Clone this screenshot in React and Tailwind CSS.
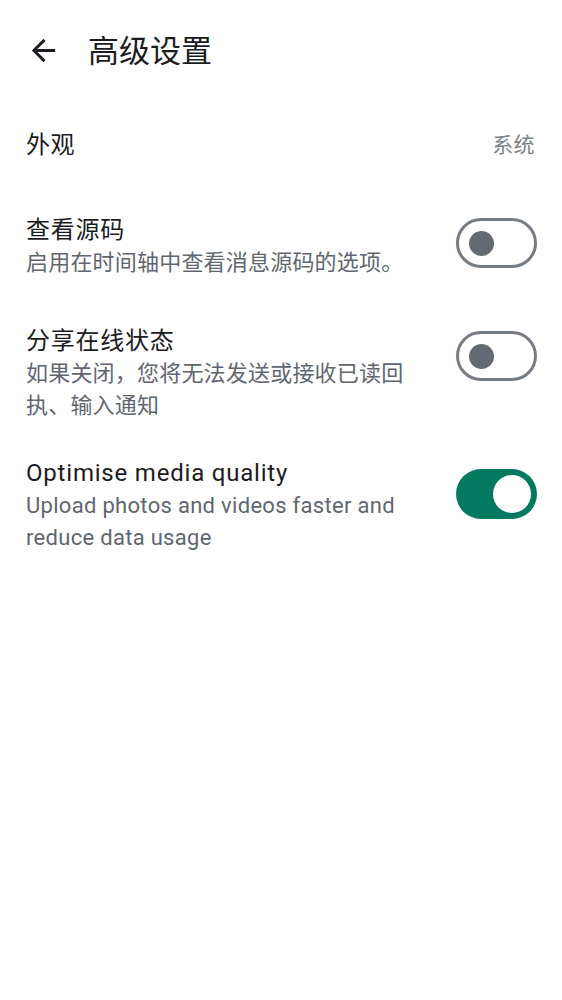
import { useState } from 'react';

const Toggle = ({ on, onClick, className }) => (
    <button
        onClick={onClick}
        className={`relative w-[81px] h-[50px] shrink-0 rounded-full ${on ? 'bg-[#037a5f]' : 'border-[3px] border-[#767c84] bg-white'} ${className}`}
    >
        {on ? (
            <span className="absolute right-[6px] top-[6px] h-[38px] w-[38px] rounded-full bg-white" />
        ) : (
            <span className="absolute left-[9.5px] top-[9.5px] h-[25px] w-[25px] rounded-full bg-[#646a73]" />
        )}
    </button>
);

const App = () => {
    const [source, setSource] = useState(false);
    const [presence, setPresence] = useState(false);
    const [media, setMedia] = useState(true);

    return (
        <div className="min-h-screen w-full bg-white text-[#1b1c1f] font-['Roboto','Noto_Sans_CJK_SC',sans-serif]">
            {/* top bar */}
            <div className="flex h-[103px] items-center">
                <button className="ml-[26px] mt-[-3px] flex h-[35px] w-[35px] items-center justify-center">
                    <svg viewBox="0 0 24 24" width="35" height="35" fill="#1b1c1f">
                        <path d="M20 11H7.83l5.59-5.59L12 4l-8 8 8 8 1.41-1.41L7.83 13H20v-2z" />
                    </svg>
                </button>
                <h1 className="ml-[27px] text-[31px] leading-[40px] font-normal">高级设置</h1>
            </div>

            {/* appearance */}
            <div className="flex h-[84px] items-center justify-between pl-[26px] pr-[27px]">
                <span className="text-[24px] leading-[32px] tracking-[0.5px]">外观</span>
                <span className="text-[21px] leading-[32px] tracking-[0.4px] text-[#7d838b]">系统</span>
            </div>

            {/* view source */}
            <div className="flex items-start justify-between pl-[26px] pr-[25px] pt-[27px]">
                <div className="flex flex-col">
                    <span className="text-[24px] leading-[32px] tracking-[0.75px]">查看源码</span>
                    <span className="mt-[1px] text-[22px] leading-[32px] tracking-[0.2px] text-[#5f666f]">启用在时间轴中查看消息源码的选项。</span>
                </div>
                <Toggle on={source} onClick={() => setSource(!source)} className="mt-[4px]" />
            </div>

            {/* presence */}
            <div className="flex items-start justify-between pl-[26px] pr-[25px] pt-[46px]">
                <div className="flex w-[385px] flex-col">
                    <span className="text-[24px] leading-[32px] tracking-[0.75px]">分享在线状态</span>
                    <span className="mt-[1px] text-[22px] leading-[32px] tracking-[0.2px] text-[#5f666f]">如果关闭，您将无法发送或接收已读回执、输入通知</span>
                </div>
                <Toggle on={presence} onClick={() => setPresence(!presence)} className="mt-[6px]" />
            </div>

            {/* media quality */}
            <div className="flex items-start justify-between pl-[26px] pr-[25px] pt-[35px]">
                <div className="flex w-[390px] flex-col">
                    <span className="text-[24px] leading-[32px] tracking-[0.8px]">Optimise media quality</span>
                    <span className="mt-[1px] text-[22px] leading-[32px] tracking-[0.3px] text-[#5f666f]">Upload photos and videos faster and reduce data usage</span>
                </div>
                <Toggle on={media} onClick={() => setMedia(!media)} className="mt-[12px]" />
            </div>
        </div>
    );
};

export default App;
